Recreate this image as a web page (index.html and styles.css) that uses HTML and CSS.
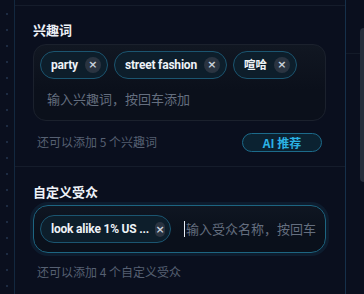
FILE: index.html
```html
<!DOCTYPE html>
<html lang="zh-CN">
<head>
<meta charset="utf-8">
<link rel="stylesheet" href="styles.css">
</head>
<body>
<div class="frame">
  <div class="rail-left"></div>
  <main class="main">
    <section class="section">
      <h3 class="title">兴趣词</h3>
      <div class="box">
        <div class="chips">
          <span class="chip"><span class="chip-text">party</span><span class="chip-x">×</span></span>
          <span class="chip"><span class="chip-text">street fashion</span><span class="chip-x">×</span></span>
          <span class="chip"><span class="chip-text chip-text-cjk">喧哈</span><span class="chip-x">×</span></span>
        </div>
        <div class="placeholder">输入兴趣词，按回车添加</div>
      </div>
      <div class="helper-row">
        <span class="helper">还可以添加 5 个兴趣词</span>
        <button class="ai-btn">AI 推荐</button>
      </div>
    </section>
    <section class="section section-2">
      <h3 class="title">自定义受众</h3>
      <div class="box box-focus">
        <div class="focus-row">
          <span class="chip chip-long"><span class="chip-text">look alike 1% US ...</span><span class="chip-x chip-x-small">×</span></span>
          <div class="input-line"><span class="caret"></span><span class="placeholder-inline">输入受众名称，按回车</span></div>
        </div>
      </div>
      <div class="helper helper-2">还可以添加 4 个自定义受众</div>
    </section>
  </main>
  <div class="rail-right"><div class="rr-line"></div><div class="thumb"></div></div>
</div>
</body>
</html>
```

FILE: styles.css
```css
* { box-sizing: border-box; }
html, body { margin: 0; padding: 0; }
body {
  width: 364px;
  height: 294px;
  overflow: hidden;
  background: #0a0f1e;
  font-family: "Noto Sans CJK SC", "Noto Sans", sans-serif;
  color: #e6ebf3;
}
.frame {
  display: flex;
  height: 294px;
}
.rail-left {
  width: 15px;
  flex: none;
  border-right: 1px solid #13283f;
  background-image: radial-gradient(circle at 7px 15px, #1d2b42 1px, transparent 1.4px);
  background-size: 15px 16px;
  background-position: 0 -1px;
}
.main {
  width: 330px;
  flex: none;
  padding-top: 5px;
}
.section {
  border-top: 1px solid #151c2b;
  padding: 15px 19px 14px 18px;
}
.section-2 { padding-top: 16px; }
.title {
  margin: 0 0 5px 0;
  font-size: 13px;
  line-height: 18px;
  font-weight: 700;
  color: #eef2f8;
}
.section-2 .title { margin-bottom: 4px; }
.box {
  border: 1px solid #1b212d;
  border-radius: 13px;
  background: linear-gradient(#111722, #0b101b 60%);
  padding: 6px 6px 11px 6px;
}
.chips {
  display: flex;
  flex-wrap: wrap;
  gap: 6px;
}
.chip {
  display: inline-flex;
  align-items: center;
  height: 28px;
  padding: 0 6px 0 10px;
  gap: 7px;
  border: 1px solid #1b5570;
  border-radius: 14px;
  background: #0d1e2b;
  white-space: nowrap;
}
.chip-text {
  font-family: Roboto, "Noto Sans CJK SC", sans-serif;
  font-size: 12px;
  line-height: 16px;
  font-weight: 700;
  letter-spacing: -0.2px;
  color: #eef2f7;
}
.chip-text-cjk { font-size: 11.5px; letter-spacing: 0; }
.chip-x {
  flex: none;
  width: 16px;
  height: 16px;
  border-radius: 50%;
  background: #2a3441;
  color: #c9d1db;
  font-family: "DejaVu Sans", sans-serif;
  font-size: 11px;
  line-height: 16px;
  text-align: center;
  font-weight: 700;
}
.placeholder {
  margin-top: 10px;
  padding-left: 7px;
  font-size: 13px;
  line-height: 20px;
  color: #646e7f;
}
.helper-row {
  margin-top: 11px;
  display: flex;
  align-items: center;
  justify-content: space-between;
  padding: 0 4px;
  height: 20px;
}
.helper {
  font-size: 12px;
  line-height: 18px;
  color: #566072;
}
.ai-btn {
  width: 80px;
  height: 19px;
  border: 1px solid #1c6a8a;
  border-radius: 10px;
  background: #0b2231;
  color: #2bb3e6;
  font-family: "Noto Sans CJK SC", sans-serif;
  font-size: 12px;
  font-weight: 700;
  line-height: 17px;
  padding: 0;
}
.box-focus {
  border-color: #1d6581;
  border-radius: 15px;
  box-shadow: 0 0 0 3px rgba(29, 90, 120, 0.18);
  padding: 9px 6px;
  background: linear-gradient(#0f1622, #0a101b 60%);
}
.focus-row {
  display: flex;
  align-items: center;
}
.chip-long {
  flex: none;
  gap: 6px;
  padding-right: 5px;
}
.chip-x-small { width: 10px; height: 15px; border-radius: 5px; }
.input-line {
  margin-left: 13px;
  flex: 1;
  min-width: 0;
  display: flex;
  align-items: center;
  white-space: nowrap;
}
.caret {
  width: 1px;
  height: 16px;
  background: #e8edf5;
  flex: none;
}
.placeholder-inline {
  font-size: 13px;
  line-height: 20px;
  color: #646e7f;
  margin-left: 1px;
}
.helper-2 {
  margin-top: 10px;
  padding-left: 4px;
}
.rail-right {
  flex: 1;
  border-left: 1px solid #16304a;
  position: relative;
}
.rr-line {
  margin-top: 53px;
  height: 1px;
  background: #131a28;
}
.thumb {
  position: absolute;
  right: 0;
  top: 28px;
  width: 4px;
  height: 154px;
  background: #262d3b;
  border-radius: 4px 0 0 4px;
}
```
